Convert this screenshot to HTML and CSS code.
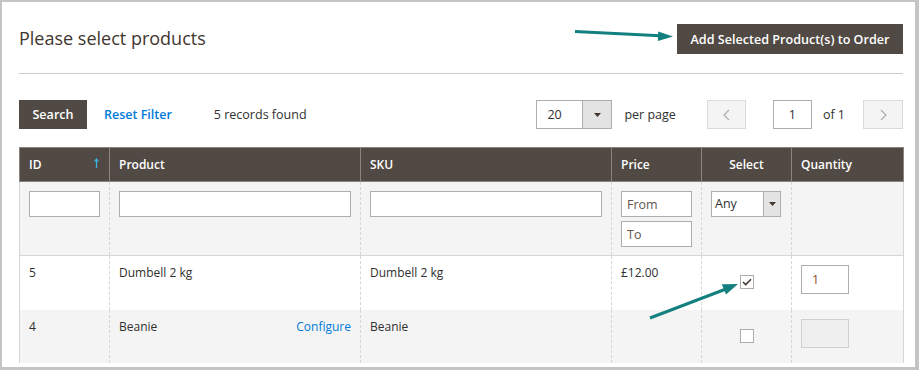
FILE: index.html
```html
<!DOCTYPE html>
<html>
<head>
  <meta charset="utf-8">
  <link rel="stylesheet" href="styles.css">
</head>
<body>
<div class="frame">
  <div class="page-head">
    <h1 class="title">Please select products</h1>
    <button class="btn-primary">Add Selected Product(s) to Order</button>
  </div>

  <div class="toolbar">
    <div class="toolbar-left">
      <button class="btn-search">Search</button>
      <a class="link reset">Reset Filter</a>
      <span class="count">5 records found</span>
    </div>
    <div class="toolbar-right">
      <div class="select limit">
        <span class="select-val">20</span>
        <span class="select-btn"><svg width="7" height="4" viewBox="0 0 7 4"><path d="M0 0h7L3.5 4z" fill="#41362f"/></svg></span>
      </div>
      <span class="per-page">per page</span>
      <button class="pager-btn prev"><svg width="7" height="12" viewBox="0 0 7 12"><path d="M6 1L1 6l5 5" fill="none" stroke="#adadad" stroke-width="1.2"/></svg></button>
      <input class="page-input" value="1">
      <span class="of">of 1</span>
      <button class="pager-btn next"><svg width="7" height="12" viewBox="0 0 7 12"><path d="M1 1l5 5-5 5" fill="none" stroke="#adadad" stroke-width="1.2"/></svg></button>
    </div>
  </div>

  <table class="grid">
    <colgroup>
      <col class="col-id">
      <col class="col-product">
      <col class="col-sku">
      <col class="col-price">
      <col class="col-select">
      <col class="col-qty">
    </colgroup>
    <thead>
      <tr>
        <th>ID <svg class="sort" width="5" height="10" viewBox="0 0 5 10"><path d="M2.5 10V1.5M0.5 3.5l2-2.5 2 2.5" fill="none" stroke="#36b7e8" stroke-width="1.2"/></svg></th>
        <th>Product</th>
        <th>SKU</th>
        <th>Price</th>
        <th class="th-center">Select</th>
        <th>Quantity</th>
      </tr>
    </thead>
    <tbody>
      <tr class="filters">
        <td><input class="field"></td>
        <td><input class="field"></td>
        <td><input class="field"></td>
        <td>
          <input class="field" placeholder="From">
          <input class="field to" placeholder="To">
        </td>
        <td>
          <div class="select any">
            <span class="select-val">Any</span>
            <span class="select-btn"><svg width="7" height="4" viewBox="0 0 7 4"><path d="M0 0h7L3.5 4z" fill="#41362f"/></svg></span>
          </div>
        </td>
        <td></td>
      </tr>
      <tr class="row row-odd">
        <td>5</td>
        <td>Dumbell 2 kg</td>
        <td>Dumbell 2 kg</td>
        <td>£12.00</td>
        <td class="center"><span class="check checked"><svg width="10" height="8" viewBox="0 0 10 8"><path d="M1 4l2.7 2.6L9 1.2" fill="none" stroke="#41362f" stroke-width="1.5"/></svg></span></td>
        <td><input class="qty" value="1"></td>
      </tr>
      <tr class="row row-even">
        <td>4</td>
        <td>Beanie <a class="link configure">Configure</a></td>
        <td>Beanie</td>
        <td></td>
        <td class="center"><span class="check"></span></td>
        <td><input class="qty" disabled></td>
      </tr>
    </tbody>
  </table>

  <svg class="annot" width="919" height="370" viewBox="0 0 919 370">
    <line x1="575" y1="31.5" x2="660" y2="35.8" stroke="#13807f" stroke-width="3"/>
    <polygon points="673,36.5 657.8,41 658.3,31.5" fill="#13807f"/>
    <line x1="650" y1="318" x2="726" y2="289" stroke="#13807f" stroke-width="3"/>
    <polygon points="738,284 726,294.5 721.8,284.2" fill="#13807f"/>
  </svg>
</div>
</body>
</html>
```

FILE: styles.css
```css
html, body {
  margin: 0;
  padding: 0;
}
body {
  font-family: "Open Sans", "Liberation Sans", sans-serif;
  font-size: 12.5px;
  color: #303030;
  background: #fff;
}

.frame {
  position: relative;
  box-sizing: border-box;
  width: 919px;
  height: 370px;
  border-style: solid;
  border-color: #c4c4c4;
  border-width: 2px 4px 3px 2px;
  padding: 0 12px 0 17px;
  overflow: hidden;
}

.page-head {
  display: flex;
  justify-content: space-between;
  align-items: center;
  padding: 22px 0 19px;
  border-bottom: 1px solid #cccccc;
}
.title {
  margin: 0 0 3px;
  font-size: 18px;
  font-weight: 400;
  color: #41362f;
  line-height: 26px;
}
.btn-primary {
  height: 30px;
  width: 226px;
  padding: 0;
  border: 0;
  background: #514943;
  color: #fff;
  font-family: inherit;
  font-size: 12.6px;
  font-weight: 600;
}

.toolbar {
  display: flex;
  justify-content: space-between;
  align-items: center;
  margin-top: 26px;
  height: 29px;
}
.toolbar-left, .toolbar-right {
  display: flex;
  align-items: center;
}
.btn-search {
  height: 29px;
  width: 68px;
  padding: 0;
  border: 0;
  background: #514943;
  color: #fff;
  font-family: inherit;
  font-size: 12.6px;
  font-weight: 600;
}
.link {
  color: #007bdb;
  text-decoration: none;
}
.reset {
  margin-left: 17px;
  font-weight: 600;
}
.count {
  margin-left: 42px;
}

.select {
  display: flex;
  box-sizing: border-box;
  border: 1px solid #adadad;
  background: #fff;
}
.select-val {
  flex: 1;
  padding-left: 10px;
}
.select-btn {
  display: flex;
  align-items: center;
  justify-content: center;
  background: #e3e3e3;
  border-left: 1px solid #adadad;
}
.limit {
  width: 76px;
  height: 29px;
  align-items: stretch;
}
.limit .select-val {
  line-height: 27px;
}
.limit .select-btn {
  width: 28px;
}
.per-page {
  margin-left: 12px;
}
.pager-btn {
  display: flex;
  align-items: center;
  justify-content: center;
  box-sizing: border-box;
  width: 39px;
  height: 29px;
  padding: 0;
  border: 1px solid #dadada;
  background: #f4f4f4;
}
.prev {
  margin-left: 31px;
}
.page-input {
  box-sizing: border-box;
  width: 39px;
  height: 29px;
  margin-left: 27px;
  border: 1px solid #adadad;
  font-family: inherit;
  font-size: 12.5px;
  color: #303030;
  text-align: center;
  padding: 0;
}
.of {
  margin-left: 11px;
}
.next {
  margin-left: 18px;
  width: 40px;
}

.grid {
  margin-top: 18px;
  width: 884px;
  table-layout: fixed;
  border-collapse: collapse;
  font-size: 12px;
}
.col-id { width: 90px; }
.col-product { width: 251px; }
.col-sku { width: 251px; }
.col-price { width: 90px; }
.col-select { width: 90px; }
.col-qty { width: 112px; }
.grid th {
  height: 33px;
  padding: 0 9px;
  background: #514943;
  color: #fff;
  font-weight: 600;
  text-align: left;
  border: 1px solid #8a837f;
  position: relative;
}
.grid th.th-center {
  text-align: center;
}
.sort {
  position: absolute;
  right: 10px;
  top: 10px;
}

.grid td {
  vertical-align: top;
  padding: 8px 9px 0 9px;
  line-height: 18px;
  border-left: 1px dashed #d6d6d6;
  border-right: 1px dashed #d6d6d6;
}
.grid td:first-child {
  border-left: 1px solid #d6d6d6;
}
.grid td:last-child {
  border-right: 1px solid #d6d6d6;
}
.filters {
  height: 74px;
  background: #f4f4f4;
  border-bottom: 1px solid #d6d6d6;
}
.filters td {
  padding-top: 9px;
}
.field {
  display: block;
  box-sizing: border-box;
  width: 100%;
  height: 26px;
  margin: 0;
  border: 1px solid #adadad;
  padding: 0 5px;
  font-family: inherit;
  font-size: 12.5px;
  color: #303030;
  background: #fff;
}
.field::placeholder {
  color: #5f5650;
}
.to {
  margin-top: 4px;
}
.any {
  width: 70px;
  height: 26px;
}
.any .select-val {
  padding-left: 3px;
  line-height: 24px;
  font-size: 12.5px;
}
.any .select-btn {
  width: 16px;
}

.row-odd {
  height: 54px;
  background: #fff;
}
.row-even {
  height: 53px;
  background: #f4f4f4;
}
.configure {
  float: right;
}
.center {
  text-align: center;
}
.check {
  display: inline-flex;
  align-items: center;
  justify-content: center;
  box-sizing: border-box;
  width: 14px;
  height: 14px;
  margin-top: 11px;
  border: 1px solid #adadad;
  background: #fff;
  vertical-align: top;
}
.qty {
  display: block;
  box-sizing: border-box;
  width: 48px;
  height: 29px;
  margin-top: 1px;
  border: 1px solid #adadad;
  padding: 0 10px;
  font-family: inherit;
  font-size: 12.5px;
  color: #8a4a2a;
  background: #fff;
}
.qty:disabled {
  background: #efefef;
  border-color: #d0d0d0;
}

.annot {
  position: absolute;
  left: -2px;
  top: -2px;
  pointer-events: none;
}
```
